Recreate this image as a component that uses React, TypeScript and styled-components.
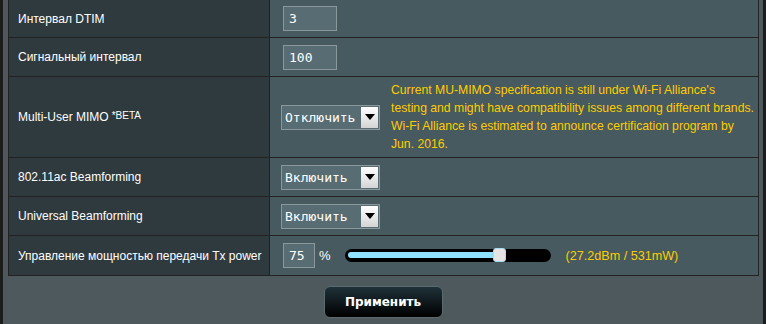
import styled, { createGlobalStyle } from 'styled-components';

const GlobalStyle = createGlobalStyle`
  html, body {
    margin: 0;
    padding: 0;
    background: #1c1c1c;
    font-family: "Liberation Sans", Arial, sans-serif;
    overflow: hidden;
  }
`;

const Panel = styled.div`
  margin: 0 3px;
  height: 324px;
  background: #4d595d;
  overflow: hidden;
`;

const FormTable = styled.div`
  margin: 0 4px 0 5px;
  border: 1px solid #222;
  border-top: none;
`;

const Row = styled.div<{ $h: number }>`
  display: grid;
  grid-template-columns: 261px 1fr;
  height: ${(p) => p.$h}px;
  border-bottom: 1px solid #222;

  &:last-child {
    border-bottom: none;
  }
`;

const Label = styled.div`
  box-sizing: border-box;
  background: #2f3a3e;
  border-right: 1px solid #222;
  display: flex;
  align-items: center;
  padding-left: 9px;
  color: #fff;
  font-size: 12px;

  sup {
    font-size: 10px;
    margin-left: 3px;
    position: relative;
    top: -2px;
  }
`;

const Value = styled.div`
  background: #475a5f;
  display: flex;
  align-items: center;
  padding-left: 11px;
`;

const TextInput = styled.div<{ $w: number }>`
  box-sizing: border-box;
  width: ${(p) => p.$w}px;
  height: 25px;
  margin-left: 2px;
  padding-left: 5px;
  background: #576d73;
  border: 1px solid #8a989c;
  color: #fff;
  font-family: "DejaVu Sans Mono", "Liberation Mono", monospace;
  font-size: 13px;
  display: flex;
  align-items: center;
`;

const Select = styled.div`
  box-sizing: border-box;
  width: 99px;
  height: 25px;
  flex-shrink: 0;
  background: #576d73;
  border: 1px solid #8a989c;
  color: #fff;
  font-family: "DejaVu Sans Mono", "Liberation Mono", monospace;
  font-size: 13px;
  display: flex;
  align-items: center;
  justify-content: space-between;
  padding-left: 3px;
`;

const Arrow = styled.span`
  width: 17px;
  height: 21px;
  margin-right: 1px;
  background: linear-gradient(#ffffff, #d4d4d4);
  display: flex;
  align-items: center;
  justify-content: center;

  &::after {
    content: '';
    border-left: 5px solid transparent;
    border-right: 5px solid transparent;
    border-top: 6px solid #000;
  }
`;

const Note = styled.div`
  margin-left: 11px;
  width: 363px;
  color: #ffcc00;
  font-size: 12.2px;
  line-height: 18px;
`;

const Percent = styled.span`
  color: #fff;
  font-size: 13px;
  margin-left: 4px;
`;

const Track = styled.div`
  position: relative;
  margin-left: 14px;
  width: 206px;
  height: 13px;
  border-radius: 7px;
  background: #000;
`;

const Fill = styled.div`
  position: absolute;
  left: 3px;
  top: 3px;
  height: 6px;
  border-radius: 3px;
  background: #8fe2ff;
`;

const Thumb = styled.div`
  position: absolute;
  top: -1px;
  width: 13px;
  height: 14px;
  box-sizing: border-box;
  border: 1px solid #a8d9ee;
  border-radius: 3px;
  background: #e4e4e4;
`;

const Power = styled.span`
  margin-left: 15px;
  color: #ffcc00;
  font-size: 12.6px;
`;

const Footer = styled.div`
  display: flex;
  justify-content: center;
  padding-top: 10px;
`;

const Button = styled.button`
  width: 119px;
  height: 32px;
  border: 1px solid #5b6a6e;
  border-radius: 6px;
  background: linear-gradient(#1f3138, #000);
  color: #fff;
  font-family: "DejaVu Sans", Verdana, sans-serif;
  font-weight: bold;
  font-size: 12px;
  cursor: pointer;
`;

export default function App() {
  const power = 75;
  return (
    <>
      <GlobalStyle />
      <Panel>
        <FormTable>
          <Row $h={37}>
            <Label>Интервал DTIM</Label>
            <Value>
              <TextInput $w={54}>3</TextInput>
            </Value>
          </Row>
          <Row $h={38}>
            <Label>Сигнальный интервал</Label>
            <Value>
              <TextInput $w={54}>100</TextInput>
            </Value>
          </Row>
          <Row $h={80}>
            <Label>
              Multi-User MIMO<sup>*BETA</sup>
            </Label>
            <Value>
              <Select>
                Отключить
                <Arrow />
              </Select>
              <Note>
                Current MU-MIMO specification is still under Wi-Fi Alliance's testing and might
                have compatibility issues among different brands. Wi-Fi Alliance is estimated to
                announce certification program by Jun. 2016.
              </Note>
            </Value>
          </Row>
          <Row $h={38}>
            <Label>802.11ac Beamforming</Label>
            <Value>
              <Select>
                Включить
                <Arrow />
              </Select>
            </Value>
          </Row>
          <Row $h={38}>
            <Label>Universal Beamforming</Label>
            <Value>
              <Select>
                Включить
                <Arrow />
              </Select>
            </Value>
          </Row>
          <Row $h={39}>
            <Label>Управление мощностью передачи Tx power</Label>
            <Value>
              <TextInput $w={32}>{power}</TextInput>
              <Percent>%</Percent>
              <Track>
                <Fill style={{ width: `${(power / 100) * 200 - 2}px` }} />
                <Thumb style={{ left: `${(power / 100) * 200 - 2}px` }} />
              </Track>
              <Power>(27.2dBm / 531mW)</Power>
            </Value>
          </Row>
        </FormTable>
        <Footer>
          <Button>Применить</Button>
        </Footer>
      </Panel>
    </>
  );
}
